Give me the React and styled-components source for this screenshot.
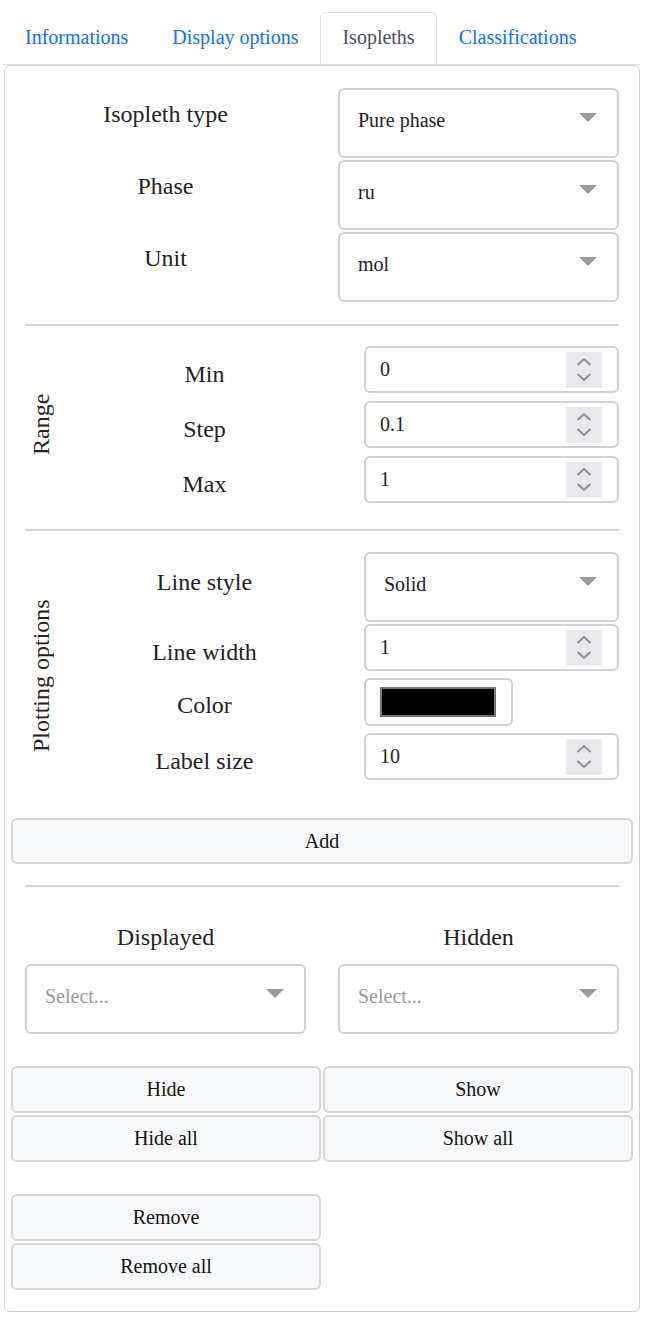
import React from "react";
import styled, { createGlobalStyle } from "styled-components";

const GlobalStyle = createGlobalStyle`
  body {
    margin: 0;
    background: #fff;
    font-family: "Liberation Serif", "Times New Roman", serif;
    color: #212529;
  }
`;

const Page = styled.div`
  width: 637px;
  padding: 12px 0 0 3px;
`;

const TabList = styled.div`
  display: flex;
  border-bottom: 1px solid #dee2e6;
`;

const Tab = styled.div`
  height: 52px;
  box-sizing: border-box;
  display: flex;
  align-items: center;
  padding: 0 21px 2px;
  font-size: 20px;
  border: 1px solid transparent;
  border-bottom: none;
  border-radius: 6px 6px 0 0;
  color: ${(p) => (p.active ? "#495057" : "#0d6efd")};
  border-color: ${(p) => (p.active ? "#dee2e6" : "transparent")};
  background: #fff;
`;

const Panel = styled.div`
  margin-left: 1px;
  border: 1px solid #cfcfcf;
  border-radius: 6px;
  padding: 21px 6px 21px 6px;
`;

const Section = styled.div`
  margin: 0 14px;
`;

const PairGrid = styled.div`
  display: grid;
  grid-template-columns: 1fr 1fr;
  column-gap: 32px;
  align-items: start;
`;

const Label = styled.div`
  font-size: 24px;
  text-align: center;
  padding-top: 14px;
  color: #222;
`;

const Divider = styled.div`
  margin: ${(p) => p.above}px 14px ${(p) => p.below}px;
  border-top: 2px solid #d4d4d4;
`;

const SelectBox = styled.div`
  height: 70px;
  box-sizing: border-box;
  margin: 1px 0;
  border: 2px solid #d0d0d0;
  border-radius: 6px;
  padding: 19px 20px 0 18px;
  display: flex;
  justify-content: space-between;
  align-items: flex-start;
  font-size: 20px;
  line-height: 23px;
  color: ${(p) => (p.placeholder ? "#9a9a9a" : "#222")};
`;

const Caret = styled.span`
  margin-top: 4px;
  width: 0;
  height: 0;
  border-left: 9.5px solid transparent;
  border-right: 9.5px solid transparent;
  border-top: 9px solid #999;
`;

const FieldGroup = styled.div`
  display: grid;
  grid-template-columns: 32px 1fr;
`;

const Fields = styled.div`
  padding-bottom: ${(p) => p.extra || 0}px;
`;

const SideTitle = styled.div`
  writing-mode: vertical-rl;
  transform: rotate(180deg);
  font-size: 24px;
  display: flex;
  align-items: center;
  justify-content: center;
  color: #222;
`;

const FieldRow = styled.div`
  display: grid;
  grid-template-columns: 1fr 255px;
  align-items: start;
`;

const FieldLabel = styled(Label)`
  padding-right: 12px;
  padding-top: ${(p) => p.top || 19}px;
`;

const NumberBox = styled.div`
  height: 47px;
  box-sizing: border-box;
  margin: ${(p) => (p.mt ?? 4)}px 0 4px;
  border: 2px solid #d0d0d0;
  border-radius: 6px;
  padding: 0 15px 0 14px;
  display: flex;
  align-items: center;
  justify-content: space-between;
  font-size: 20px;
  color: #222;
`;

const Spinner = styled.div`
  width: 36px;
  height: 36px;
  background: #e9e9ed;
  display: flex;
`;

const ColorBox = styled.div`
  width: 149px;
  height: 48px;
  box-sizing: border-box;
  margin: 3px 0;
  border: 2px solid #d0d0d0;
  border-radius: 6px;
  padding: 7px 0 0 14px;
`;

const Swatch = styled.div`
  width: 116px;
  height: 30px;
  box-sizing: border-box;
  background: #000;
  border: 2px solid #767676;
`;

const Button = styled.div`
  height: 47px;
  box-sizing: border-box;
  border: 2px solid #d6d6d6;
  border-radius: 6px;
  background: #f8f9fa;
  display: flex;
  align-items: center;
  justify-content: center;
  font-size: 20px;
  color: #111;
`;

const AddButton = styled(Button)`
  height: 46px;
  margin-top: 18px;
`;

const ListColumn = styled.div`
  display: flex;
  flex-direction: column;
  gap: 12px;
`;

const ListTitle = styled(Label)`
  padding-top: 0;
`;

const ButtonGrid = styled.div`
  display: grid;
  grid-template-columns: 1fr 1fr;
  gap: 2px;
  margin-top: ${(p) => p.top || 32}px;
`;

function Select({ value, placeholder }) {
  return (
    <SelectBox placeholder={placeholder ? 1 : undefined}>
      <span>{value || placeholder}</span>
      <Caret />
    </SelectBox>
  );
}

function NumberInput({ value, mt }) {
  return (
    <NumberBox mt={mt}>
      <span>{value}</span>
      <Spinner>
        <svg width="36" height="36" viewBox="0 0 36 36">
          <path d="M11.5 13 L18 7 L24.5 13" fill="none" stroke="#8e8e96" strokeWidth="2" />
          <path d="M11.5 22 L18 28 L24.5 22" fill="none" stroke="#8e8e96" strokeWidth="2" />
        </svg>
      </Spinner>
    </NumberBox>
  );
}

const tabs = ["Informations", "Display options", "Isopleths", "Classifications"];

export default function App() {
  return (
    <Page>
      <GlobalStyle />
      <TabList>
        {tabs.map((t) => (
          <Tab key={t} active={t === "Isopleths" ? 1 : undefined}>
            {t}
          </Tab>
        ))}
      </TabList>
      <Panel>
        <Section>
          {[
            ["Isopleth type", "Pure phase"],
            ["Phase", "ru"],
            ["Unit", "mol"],
          ].map(([l, v]) => (
            <PairGrid key={l}>
              <Label>{l}</Label>
              <Select value={v} />
            </PairGrid>
          ))}
        </Section>

        <Divider above={21} below={16} />

        <Section>
          <FieldGroup>
            <SideTitle>Range</SideTitle>
            <Fields>
              {[
                ["Min", "0"],
                ["Step", "0.1"],
                ["Max", "1"],
              ].map(([l, v]) => (
                <FieldRow key={l}>
                  <FieldLabel>{l}</FieldLabel>
                  <NumberInput value={v} />
                </FieldRow>
              ))}
            </Fields>
          </FieldGroup>
        </Section>

        <Divider above={22} below={20} />

        <Section>
          <FieldGroup>
            <SideTitle>Plotting options</SideTitle>
            <Fields extra={16}>
              <FieldRow>
                <FieldLabel top={18}>Line style</FieldLabel>
                <Select value="Solid" />
              </FieldRow>
              <FieldRow>
                <FieldLabel top={16}>Line width</FieldLabel>
                <NumberInput value="1" mt={1} />
              </FieldRow>
              <FieldRow>
                <FieldLabel top={17}>Color</FieldLabel>
                <ColorBox>
                  <Swatch />
                </ColorBox>
              </FieldRow>
              <FieldRow>
                <FieldLabel>Label size</FieldLabel>
                <NumberInput value="10" />
              </FieldRow>
            </Fields>
          </FieldGroup>
        </Section>

        <AddButton>Add</AddButton>

        <Divider above={21} below={37} />

        <Section>
          <PairGrid>
            <ListColumn>
              <ListTitle>Displayed</ListTitle>
              <Select placeholder="Select..." />
            </ListColumn>
            <ListColumn>
              <ListTitle>Hidden</ListTitle>
              <Select placeholder="Select..." />
            </ListColumn>
          </PairGrid>
        </Section>

        <ButtonGrid top={31}>
          <Button>Hide</Button>
          <Button>Show</Button>
          <Button>Hide all</Button>
          <Button>Show all</Button>
        </ButtonGrid>

        <ButtonGrid>
          <Button>Remove</Button>
          <div />
          <Button>Remove all</Button>
        </ButtonGrid>
      </Panel>
    </Page>
  );
}
